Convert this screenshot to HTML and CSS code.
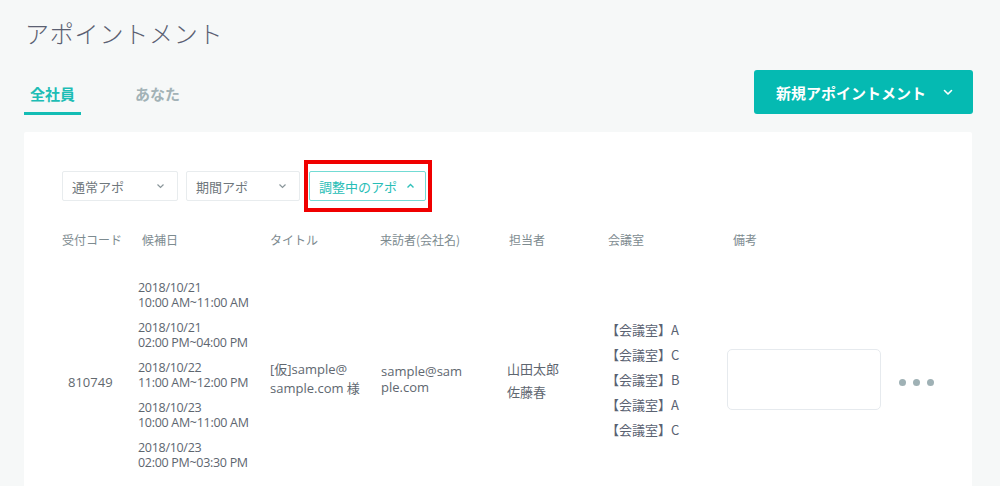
FILE: index.html
```html
<!DOCTYPE html>
<html lang="ja">
<head>
  <meta charset="UTF-8">
  <title>アポイントメント</title>
  <link rel="stylesheet" href="styles.css">
</head>
<body>
  <h1 class="page-title">アポイントメント</h1>

  <div class="toolbar">
    <div class="tabs">
      <div class="tab active">全社員</div>
      <div class="tab">あなた</div>
    </div>
    <button class="new-btn">新規アポイントメント
      <svg width="10" height="7" viewBox="0 0 10 7"><path d="M1.5 1.5 L5 5 L8.5 1.5" fill="none" stroke="#fff" stroke-width="1.6" stroke-linecap="round" stroke-linejoin="round"/></svg>
    </button>
  </div>

  <div class="card">
    <div class="filters">
      <div class="select">通常アポ
        <svg width="9" height="6" viewBox="0 0 9 6"><path d="M1.5 1.5 L4.5 4.5 L7.5 1.5" fill="none" stroke="#8a969a" stroke-width="1.2"/></svg>
      </div>
      <div class="select">期間アポ
        <svg width="9" height="6" viewBox="0 0 9 6"><path d="M1.5 1.5 L4.5 4.5 L7.5 1.5" fill="none" stroke="#8a969a" stroke-width="1.2"/></svg>
      </div>
      <div class="select-wrap">
        <div class="select open">調整中のアポ
          <svg width="9" height="6" viewBox="0 0 9 6"><path d="M1.5 4.5 L4.5 1.5 L7.5 4.5" fill="none" stroke="#2ec0b9" stroke-width="1.4"/></svg>
        </div>
        <!-- 注目枠 -->
        <div class="highlight"></div>
      </div>
    </div>

    <div class="table">
      <div class="row head">
        <div class="c-code">受付コード</div>
        <div class="c-date">候補日</div>
        <div class="c-title">タイトル</div>
        <div class="c-visitor">来訪者(会社名)</div>
        <div class="c-staff">担当者</div>
        <div class="c-room">会議室</div>
        <div class="c-note">備考</div>
        <div></div>
      </div>

      <div class="row body">
        <div class="c-code code">810749</div>
        <div class="c-date dates">
          <div class="slot">2018/10/21<br>10:00 AM~11:00 AM</div>
          <div class="slot">2018/10/21<br>02:00 PM~04:00 PM</div>
          <div class="slot">2018/10/22<br>11:00 AM~12:00 PM</div>
          <div class="slot">2018/10/23<br>10:00 AM~11:00 AM</div>
          <div class="slot">2018/10/23<br>02:00 PM~03:30 PM</div>
        </div>
        <div class="c-title title">[仮]sample@<br>sample.com&nbsp;様</div>
        <div class="c-visitor visitor">sample@sam<br>ple.com</div>
        <div class="c-staff staff">山田太郎<br>佐藤春</div>
        <div class="c-room rooms">
          <div>【会議室】A</div>
          <div>【会議室】C</div>
          <div>【会議室】B</div>
          <div>【会議室】A</div>
          <div>【会議室】C</div>
        </div>
        <div class="c-note note"><div class="note-box"></div></div>
        <div class="more"><span></span><span></span><span></span></div>
      </div>
    </div>
  </div>
</body>
</html>
```

FILE: styles.css
```css
* { box-sizing: border-box; margin: 0; padding: 0; }

body {
  font-family: "Noto Sans CJK JP", "Noto Sans", sans-serif;
  background: #f6f8f8;
  color: #5c6470;
  width: 1000px;
  height: 486px;
  overflow: hidden;
  padding: 0 27px 0 24px;
}

.page-title {
  font-size: 24px;
  font-weight: 300;
  color: #5b6072;
  line-height: 32px;
  padding-top: 17px;
  padding-left: 1px;
  letter-spacing: 0.8px;
}

.toolbar {
  display: flex;
  justify-content: space-between;
  align-items: flex-end;
  margin-top: 21px;
}

.tabs {
  display: flex;
}

.tab {
  font-size: 15px;
  font-weight: 700;
  color: #a2b2b6;
  padding: 14px 6px 0;
  line-height: 20px;
  height: 45px;
  margin-right: 42px;
}

.tab.active {
  color: #1dbdb5;
  border-bottom: 3px solid #13bdb5;
  margin-right: 48px;
}

.new-btn {
  font-family: inherit;
  background: #05bab2;
  color: #fff;
  border: none;
  border-radius: 3px;
  font-size: 15px;
  font-weight: 700;
  height: 44px;
  width: 219px;
  margin-bottom: 1px;
  display: flex;
  align-items: center;
  padding-left: 22px;
  gap: 17px;
}

.card {
  background: #fff;
  margin-top: 17px;
  margin-right: 1px;
  height: 355px;
  padding: 39px 38px 0 38px;
  border-radius: 2px 2px 0 0;
}

.filters {
  display: flex;
  gap: 8px;
}

.select {
  height: 30px;
  width: 116px;
  border: 1px solid #e8ecee;
  border-radius: 2px;
  font-size: 13px;
  color: #6f777c;
  display: flex;
  align-items: center;
  justify-content: space-between;
  padding: 0 12px 0 9px;
}

.filters > .select:nth-child(2) { width: 114px; }

.select-wrap {
  position: relative;
}

.select.open {
  width: 117px;
  border: 1px solid #73dbd4;
  color: #27bdb6;
  padding-right: 10px;
  margin-left: 1px;
}

.highlight {
  position: absolute;
  left: -4px;
  top: -11px;
  width: 128px;
  height: 52px;
  border: 4px solid #f00000;
}

.row {
  display: grid;
  grid-template-columns: 76px 132px 110px 127px 99px 121px 172px 60px;
  align-items: center;
}

.row.head {
  margin-top: 30px;
  font-size: 12px;
  color: #7d8b90;
  line-height: 18px;
}

.row.head .c-date { padding-left: 4px; }
.row.head .c-staff { padding-left: 2px; }
.row.head .c-room { padding-left: 2px; }
.row.head .c-note { padding-left: 6px; }

.row.body {
  margin-top: 31px;
  font-size: 13px;
  color: #5e6670;
}

.code {
  font-family: "Open Sans", sans-serif;
  padding: 14px 0 0 6px;
  color: #62696f;
}

.dates {
  font-family: "Open Sans", sans-serif;
  font-size: 12.5px;
  letter-spacing: -0.3px;
  color: #5e6670;
  line-height: 15px;
  display: flex;
  flex-direction: column;
  gap: 10px;
}

.title {
  font-family: "Open Sans", "Noto Sans CJK JP", sans-serif;
  line-height: 19px;
  padding-top: 7px;
  color: #60676f;
}

.visitor {
  font-family: "Open Sans", sans-serif;
  line-height: 16px;
  color: #60676f;
  padding: 7px 0 0 1px;
}

.staff {
  line-height: 23px;
  color: #5e6670;
  padding-top: 10px;
}

.rooms {
  line-height: 25px;
  color: #5a6272;
  padding-top: 8px;
}

.note {
  padding-top: 8px;
}

.note-box {
  width: 154px;
  height: 61px;
  border: 1px solid #e6eaee;
  border-radius: 5px;
}

.more {
  display: flex;
  gap: 7px;
  padding-top: 15px;
}

.more span {
  width: 7px;
  height: 7px;
  border-radius: 50%;
  background: #9fb1b5;
}
```
